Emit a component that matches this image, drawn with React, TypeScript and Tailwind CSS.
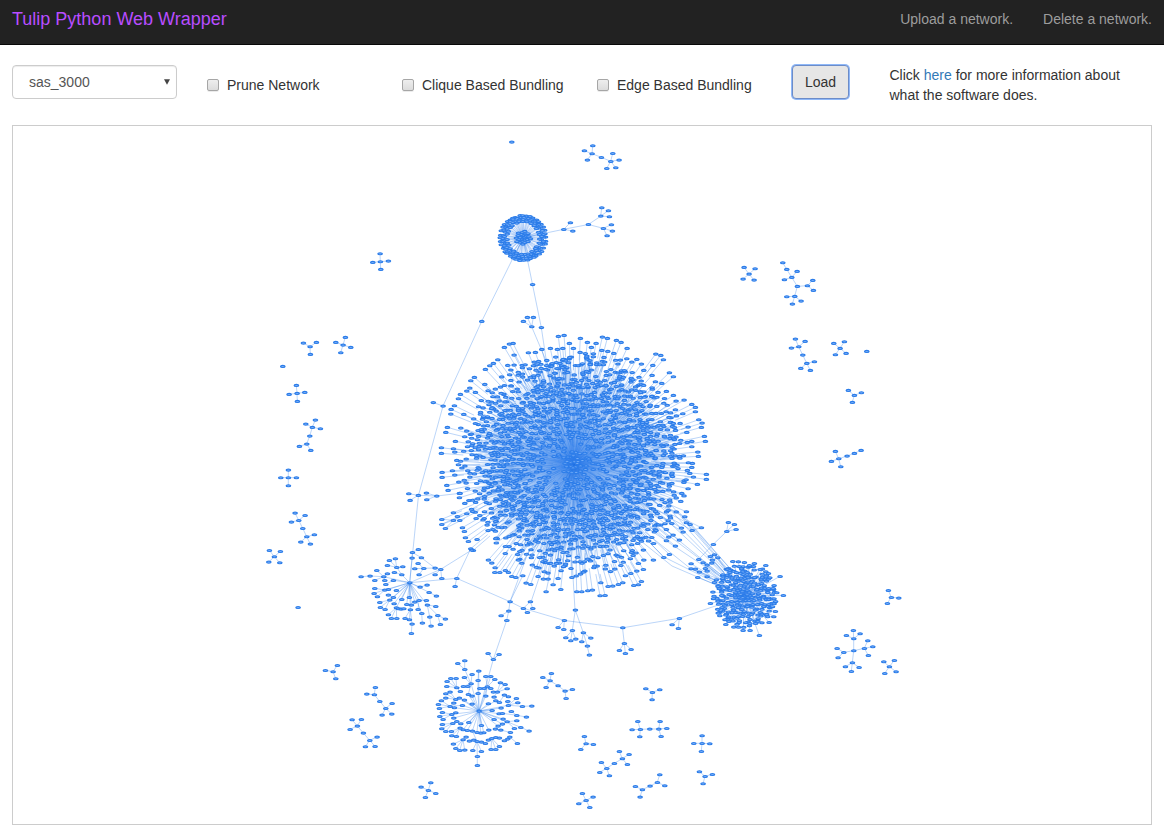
import React from "react";

type Point = [number, number];
type Edge = [Point, Point];

const nodes: Point[] = [];
const edges: Edge[] = [];
const spokes: Edge[] = [];
const seen = new Set<string>();

function addNode(p: Point) {
  const key = `${Math.round(p[0] * 2)}:${Math.round(p[1] * 2)}`;
  if (seen.has(key)) return;
  seen.add(key);
  nodes.push(p);
}

// Each star is "hub leaf leaf ..."; stars are separated by ";".
// Coordinates are thirds of a pixel, relative to the sheet's origin.
function parse(ox: number, oy: number, text: string): Point[][] {
  return text
    .trim()
    .split(";")
    .map((s) => s.trim())
    .filter(Boolean)
    .map((s) =>
      s.split(/\s+/).map((p) => {
        const [x, y] = p.split(",").map(Number);
        return [ox + x / 3, oy + y / 3] as Point;
      }),
    );
}

function stars(ox: number, oy: number, text: string) {
  for (const [hub, ...leaves] of parse(ox, oy, text)) {
    for (const leaf of leaves) {
      edges.push([hub, leaf]);
      addNode(leaf);
    }
    addNode(hub);
  }
}

// Nodes at the rim of a cluster, each joined to a point nearer its centre.
function rim(ox: number, oy: number, centre: Point, reach: number, text: string) {
  for (const [p] of parse(ox, oy, text.trim().replace(/\s+/g, ";"))) {
    const dx = centre[0] - p[0];
    const dy = centre[1] - p[1];
    const d = Math.hypot(dx, dy) || 1;
    const k = Math.min(reach, d) / d;
    edges.push([p, [p[0] + dx * k, p[1] + dy * k]]);
    addNode(p);
  }
}

function generator(seed: number) {
  let s = seed;
  return () => {
    s = (s + 0x6d2b79f5) | 0;
    let t = Math.imul(s ^ (s >>> 15), 1 | s);
    t = (t + Math.imul(t ^ (t >>> 7), 61 | t)) ^ t;
    return ((t ^ (t >>> 14)) >>> 0) / 4294967296;
  };
}

const MAIN: Point = [574, 463.5];
const RING: Point = [523, 237.8];
const EAST: Point = [744.5, 596];

function mainCluster() {
  const rnd = generator(41);
  const golden = 2.399963;
  const core: Point[] = [];
  const total = 2150;
  for (let i = 0; i < total; i++) {
    const r = Math.abs(106 * Math.sqrt((i + 0.5) / total) + (rnd() - 0.5) * 4);
    const a = i * golden + (rnd() - 0.5) * (4 / Math.max(r, 8));
    if (r > 10 && r < 26 && rnd() < 0.5) continue;
    if (r >= 26 && r < 46 && rnd() < 0.32) continue;
    if (r >= 46 && r < 80 && rnd() < 0.1) continue;
    if (r >= 80 && rnd() < 0.1 + (r - 80) / 38) continue;
    const p: Point = [MAIN[0] + r * 1.03 * Math.cos(a), MAIN[1] + r * Math.sin(a)];
    core.push(p);
    const k = 1 - Math.min(0.9, (8 + rnd() * 18) / Math.max(r, 12));
    const b = a + (rnd() - 0.5) * 0.12;
    edges.push([[MAIN[0] + r * k * Math.cos(b), MAIN[1] + r * k * Math.sin(b)], p]);
  }
  for (let i = 0; i < 300; i++) {
    const a = ((i + rnd() * 0.7) / 300) * Math.PI * 2;
    const r = 45 + rnd() * 50;
    spokes.push([MAIN, [MAIN[0] + r * Math.cos(a), MAIN[1] + r * Math.sin(a)]]);
  }
  for (let i = 0; i < 220; i++) {
    const a = ((i + rnd()) / 220) * Math.PI * 2;
    const r = 96 + rnd() * 18;
    const p: Point = [MAIN[0] + r * 1.01 * Math.cos(a), MAIN[1] + r * Math.sin(a)];
    const b = a + (rnd() - 0.5) * 0.08;
    const q = r - 16 - rnd() * 24;
    edges.push([[MAIN[0] + q * Math.cos(b), MAIN[1] + q * Math.sin(b)], p]);
    core.push(p);
  }
  core.forEach(addNode);
}

function ringCluster() {
  const rnd = generator(7);
  const layers: [number, number][] = [[23.2, 40], [21, 34], [18.9, 30], [17, 27]];
  for (const [r, n] of layers) {
    for (let i = 0; i < n; i++) {
      const a = ((i + rnd() * 0.5) / n) * Math.PI * 2 + r;
      const q = r - 0.4 + rnd() * 0.9;
      const p: Point = [RING[0] + q * 0.97 * Math.cos(a), RING[1] + q * 0.96 * Math.sin(a)];
      spokes.push([RING, p]);
      addNode(p);
    }
  }
  for (let i = 0; i < 24; i++) {
    const r = 7.8 * Math.sqrt((i + 0.5) / 24);
    addNode([RING[0] + r * Math.cos(i * 2.4), RING[1] + r * 0.88 * Math.sin(i * 2.4)]);
  }
}

function eastCluster() {
  const rnd = generator(19);
  for (let i = 0; i < 290; i++) {
    const r = 32 * Math.sqrt((i + 0.5) / 290) + (rnd() - 0.5) * 4;
    const a = i * 2.399963 + rnd() * 0.2;
    if (r > 12 && rnd() < 0.18) continue;
    const p: Point = [EAST[0] + r * Math.cos(a), EAST[1] + r * Math.sin(a)];
    spokes.push([EAST, p]);
    addNode(p);
  }
}

// Long links between clusters.
const links: Edge[] = [
  [RING, [481.7, 321.3]], [[481.7, 321.3], [443, 406]], [[443, 406], [418.5, 495.3]],
  [[418.5, 495.3], [409.7, 582.7]], [[443, 406], [433.2, 402.5]],
  [RING, [532.5, 284.5]], [[532.5, 284.5], [541.3, 327.5]], [[541.3, 327.5], [550, 385]],
  [[531.7, 326.8], [550, 370]], [RING, [563.7, 229.3]], [[563.7, 229.3], [588.3, 224.5]],
  [[588.3, 224.5], [601, 216]], [[588.3, 224.5], [603.3, 228.3]],
  [[575, 610], [572, 560]], [[523.3, 608.3], [564.5, 620.5]],
  [[564.5, 620.5], [622.5, 627.8]], [[622.5, 627.8], [679.3, 618.3]], [[679.3, 618.3], EAST],
  [[510, 601.7], [529, 550]], [[531, 602], [545, 560]],
  [[622.5, 627.8], [624.3, 643.3]],
  [[636, 537], [672, 566]], [[672, 566], [716, 585]], [[640, 533], [664, 557]], [[664, 557], [714, 582]],
  [[645, 532], [691, 569]], [[691, 569], [722, 580]], [[650, 530], [722, 578]], [[648, 520], [724, 577]],
  [[655, 521], [720, 574]], [[658, 512], [728, 577]], [[664, 511], [724, 572]], [[668, 507], [730, 576]],
  [[672, 506], [729, 572]], [[678, 511], [731, 573]], [[690, 524], [733, 572]], [[684, 516], [735, 574]],
];
edges.push(...links);
for (const [x, y] of [[532.5, 284.5], [481.7, 321.3], [541.3, 327.5], [443, 406], [433.2, 402.5], [511.7, 142]] as Point[]) {
  addNode([x, y]);
}

mainCluster();
ringCluster();
eastCluster();

rim(430, 330, MAIN, 22, `
385,19 402,16 451,25 472,37 498,40 517,21 532,25 559,31 573,37 591,55 418,40 430,55 484,52 335,58 361,55 382,58 398,55
316,67 295,68 450,67 515,61 533,64 551,70 470,78 490,80 419,82 203,89 190,100 179,107 166,118 233,106 252,105 133,142
122,152 164,163 119,174 91,193 110,183 85,206 136,187 73,227 63,238 62,252 101,253 52,292 47,307 92,294 76,334 34,353
34,370 70,356 74,366 80,391 36,427 36,442 74,435 67,422 85,404 50,466 54,481 86,456 88,490 104,520 88,503 70,548
82,559 89,571 35,568 35,583 46,595 70,571 97,593 103,604 106,623 115,634 122,656 130,661 141,628 175,690 185,699
195,713 194,727 209,727 226,721 235,727 245,739 257,742 288,759 302,763 324,739 340,747 354,747 348,785 369,764 384,745
392,778 440,785 455,785 473,782 487,780 512,758 510,797 525,796 534,769 548,768 565,763 578,758 611,766 625,764 634,754
586,737 602,730 620,723 640,718 625,700 641,690 670,690 640,660 620,88 634,102 590,86 605,96 571,90 641,121 666,136
668,106 700,89 692,76 677,72 718,128 730,140 695,160 676,155 709,184 730,196 738,213 762,210 785,223 796,232 796,245
758,251 736,239 806,269 816,279 814,292 774,291 770,307 750,280 823,319 826,334 785,334 785,350 803,366 805,379
760,377 775,398 787,400 785,412 779,430 829,433 829,448 790,441 802,463 768,449 774,476 755,490 752,514 769,545 764,560
780,583 814,593 786,601 754,594 725,580 759,606 748,630 729,615 716,621 709,632 736,648 718,673 701,682 709,598
238,42 249,40 223,52 252,75 415,98 320,104 350,91 365,108 397,112 390,100 285,104 310,107 500,98 520,104 480,103`);

stars(420, 130, `
516,71 518,47 493,62 502,90 544,82; 572,94 544,82 578,70 597,90 587,113 560,115; 431,298 451,278 458,303;
505,283; 542,258 545,233 565,242 568,260; 550,295 574,284 577,303 561,317; 335,590 310,574 322,562 340,562`);

stars(350, 480, `
205,46 176,41 180,61 260,48; 260,48 229,39 230,59 330,40; 310,121 275,118 275,133 286,145 350,101;
179,308 186,234 272,268 320,295 155,284 130,301 101,290 115,328 104,330 139,331 130,352 119,360 155,358 132,371 178,352 170,373 184,375 194,366 181,389 207,361 139,383 210,321 237,337 232,375 215,400;
187,217 205,208 214,233 186,234; 214,233 255,264; 221,265 194,266 204,250 207,284 255,264; 272,268 255,264 255,284 275,295 365,210;
320,295 315,319 362,206 480,365; 480,365 518,287 476,393 520,385; 476,393 453,407 470,421; 470,421 430,538;
430,538 414,520 447,523; 520,385 541,365 532,397; 541,365 548,385;
140,262 118,241 136,236 112,256 158,260 155,284; 101,290 60,288 80,271 112,281 104,301 74,301; 60,288 33,290; 155,284 133,277; 130,301 107,313;
104,330 74,325 72,340 82,350; 130,352 115,345; 119,360 89,367 91,382 105,388; 139,383 115,404 124,415 140,415 145,386 153,387 161,386;
181,389 165,415 178,419 186,432; 186,432 184,460; 207,361 204,388 229,361; 210,321 231,315; 237,337 259,348; 232,375 257,379 239,411 263,406; 215,400 217,429; 239,411 243,438; 263,406 271,433 286,417`);

stars(410, 640, `
250,58 234,40 267,43 207,213; 164,88 143,70 164,62 183,131; 207,213 183,131 204,160 186,192 157,196 133,203 125,223 131,234 176,247 152,251 214,256 235,191 246,211 273,204 267,221 252,238 264,258 236,270 227,168 186,168 175,163 163,180 148,174 221,278 212,279 201,277 187,273 172,271 159,269 279,237 291,245 277,252 257,182 295,196 206,93 232,140;
140,143 110,139 111,124 122,115 138,115 151,154; 183,131 163,112 186,103 160,139 173,139 175,163; 204,121 206,93 204,160;
232,140 227,109 242,109 254,118 222,145 209,145 242,145 227,168; 262,156 271,128 285,133 291,146 250,156 252,171; 283,165 295,170 268,187; 268,187 257,182;
137,178 120,156 107,161 107,174 148,174; 120,199 94,182 85,193 88,205 131,189 157,196; 125,223 97,217 89,229 99,238 137,218; 128,250 97,253 95,266 107,274 140,244;
150,264 124,274 125,287 139,289 159,269; 159,299 130,312 137,325 149,331 164,330 168,291; 201,304 188,331 214,334 202,349 187,273 178,303 191,300 214,306 226,310; 202,349 202,376;
245,295 235,300 243,328 257,328 268,319 257,292 268,294; 256,267 264,258 272,270 301,277; 299,291 283,302 293,297 322,310; 291,245 320,242 313,265 332,262; 332,262 357,273;
320,226 304,214 349,231 277,220; 295,196 319,175 293,184 323,188 337,199; 337,199 365,198;
420,122 398,112 424,100 408,142 444,137; 465,153 444,137 487,148 468,175; 55,451 33,441 62,428 77,460 46,472`);

rim(640, 490, EAST, 22, `
278,214 295,215 313,217 343,220 328,226 377,226 420,259 430,316 358,436 401,380 387,397 406,364 330,421 309,421 257,403 239,377
211,340 223,277 248,254 262,237 233,203 217,210 223,194 211,199 189,218 201,225 215,219 196,235 201,243 178,246 166,237 153,236 153,221
176,208 173,262 201,260 410,308 399,295 389,263 385,250 360,238`);
stars(640, 490, `220,163 260,124 176,208; 260,124 265,97 283,103 288,118; 118,385 96,404 115,415; 156,121 184,113 139,98`);

stars(260, 240, `
361,65 360,41 385,63 362,88 338,67; 150,320 130,309 169,307 151,343; 249,315 256,292 227,307 272,322 242,338; 68,379;
111,460 109,436 134,457 112,484 87,463; 157,562 166,540 137,552 181,566 149,588; 140,612 149,588 118,619 152,631;
85,713 85,690 109,713 85,737 62,713; 116,841 105,819 135,826 94,846 128,865; 140,890 128,865 163,884 122,906 151,912;
43,950 28,931 61,934 26,966 59,968; 114,1102`);

stars(730, 250, `
57,72 42,52 75,56 39,87 72,90; 170,58 158,38 185,82; 185,82 201,64 163,89 202,109; 202,109 232,107 194,139; 232,107 248,91 250,121; 194,139 170,140 213,153 187,162;
206,290 196,267 225,274 184,294 218,315; 230,340 218,315 253,335 212,355 241,361; 330,295 311,280 343,275 316,314 348,310; 410,304;
373,436 355,421 394,428 367,457; 326,626 316,604 304,634 332,650 351,618; 373,610 351,618 393,601; 484,1042 475,1021 506,1044 472,1060;
371,1202 371,1166 403,1195 341,1207 367,1238; 371,1166 370,1141 349,1156 390,1151; 403,1195 413,1172 428,1190 415,1216;
341,1207 321,1195 324,1223; 367,1238 346,1250 364,1264 387,1252; 478,1250 461,1235 493,1231 464,1270 498,1265`);

stars(310, 650, `
69,65 46,61 82,46 77,86; 193,134 196,112 170,132 209,154; 227,175 209,154 246,160 216,195 245,192;
142,228 126,209 154,208 120,238 160,249; 179,271 160,249 201,261 166,290 195,289`);

stars(540, 590, `
106,60 97,121 130,128; 97,121 77,143 92,152 107,147; 130,128 125,155 152,144 142,168; 142,168 148,195; 73,91 54,112 71,118;
248,113; 253,160 238,181 256,190 273,178; 337,307 317,296 359,299 336,329; 301,418 293,394 276,419 299,440 329,417; 356,417 329,417 360,394 380,415 363,439;
138,461 133,439 160,463 122,478; 247,506 238,484 267,493 262,523 223,520; 200,535 223,520 184,517 179,547 208,557; 486,460 486,437 461,460 509,461 484,484;
307,599 286,589 300,621 330,588; 352,577 330,588 359,554 374,587; 495,559 478,545 517,553 489,581; 138,631 127,610 159,621 116,641 149,652`);

function Lines({ items }: { items: Edge[] }) {
  return (
    <>
      {items.map(([a, b], i) => (
        <line key={i} x1={a[0].toFixed(1)} y1={a[1].toFixed(1)} x2={b[0].toFixed(1)} y2={b[1].toFixed(1)} />
      ))}
    </>
  );
}

function NetworkGraph() {
  return (
    <svg className="block h-full w-full" viewBox="13 126 1138 698">
      <defs>
        <radialGradient id="core">
          <stop offset="0" stopColor="#2b7ce9" stopOpacity="0.9" />
          <stop offset="0.16" stopColor="#2b7ce9" stopOpacity="0.6" />
          <stop offset="0.45" stopColor="#2b7ce9" stopOpacity="0.36" />
          <stop offset="0.8" stopColor="#2b7ce9" stopOpacity="0.16" />
          <stop offset="1" stopColor="#2b7ce9" stopOpacity="0" />
        </radialGradient>
      </defs>
      <circle cx={MAIN[0]} cy={MAIN[1]} r={100} fill="url(#core)" />
      <g stroke="#2b7ce9" strokeOpacity={0.32} strokeWidth={1}>
        <Lines items={edges} />
      </g>
      <g stroke="#2b7ce9" strokeOpacity={0.18} strokeWidth={1}>
        <Lines items={spokes} />
      </g>
      <g fill="#97c2fc" stroke="#2b7ce9" strokeWidth={1.15}>
        {nodes.map(([x, y], i) => (
          <ellipse key={i} cx={(x + 0.1).toFixed(1)} cy={(y + 0.1).toFixed(1)} rx={2.3} ry={0.95} />
        ))}
      </g>
    </svg>
  );
}

function CheckOption({ label }: { label: string }) {
  return (
    <label className="flex w-[195px] items-center pt-[10px]">
      <input
        type="checkbox"
        className="mr-2 size-3 shrink-0 appearance-none rounded-[2px] border border-[#a6a6a6] bg-linear-to-b from-[#eeeeee] to-[#dcdcdc] shadow-[0_1px_0_rgba(0,0,0,0.08)]"
      />
      <span className="whitespace-nowrap">{label}</span>
    </label>
  );
}

export default function App() {
  return (
    <div className="flex h-[835px] w-[1164px] flex-col bg-white font-['Liberation_Sans',Arial,sans-serif] text-[14px] leading-5 text-[#333]">
      <nav className="flex h-[45px] shrink-0 items-start justify-between border-b border-[#080808] bg-[#222] px-3 pt-[9px]">
        <a className="text-[18px] leading-5 text-[#b84dff]">Tulip Python Web Wrapper</a>
        <div className="flex gap-[30px] text-[#9d9d9d]">
          <a>Upload a network.</a>
          <a>Delete a network.</a>
        </div>
      </nav>

      <div className="flex h-[60px] shrink-0 items-start px-3 pt-5">
        <div className="mr-[30px] grid h-[34px] w-[165px] items-center">
          <select className="col-start-1 row-start-1 h-[34px] w-full appearance-none rounded-[4px] border border-[#ccc] bg-white px-4 text-[14px] text-[#555] shadow-[inset_0_1px_1px_rgba(0,0,0,0.075)]">
            <option>sas_3000</option>
          </select>
          <svg className="pointer-events-none col-start-1 row-start-1 mr-[7px] h-[6px] w-[6px] justify-self-end" viewBox="0 0 6 6">
            <path d="M0 0.3h6L3 5.7z" fill="#444" />
          </svg>
        </div>
        <CheckOption label="Prune Network" />
        <CheckOption label="Clique Based Bundling" />
        <CheckOption label="Edge Based Bundling" />
        <button className="h-[34px] w-[57px] rounded-[4px] border border-[#6c8cc8] bg-[#e6e6e6] text-[14px] shadow-[0_0_0_1px_#8fb8f8]">
          Load
        </button>
        <p className="ml-[40.5px] w-[245px]">
          Click <a className="text-[#337ab7]">here</a> for more information about what the software does.
        </p>
      </div>

      <main className="mx-3 mt-5 h-[700px] shrink-0 border border-[#ccc]">
        <NetworkGraph />
      </main>
    </div>
  );
}
